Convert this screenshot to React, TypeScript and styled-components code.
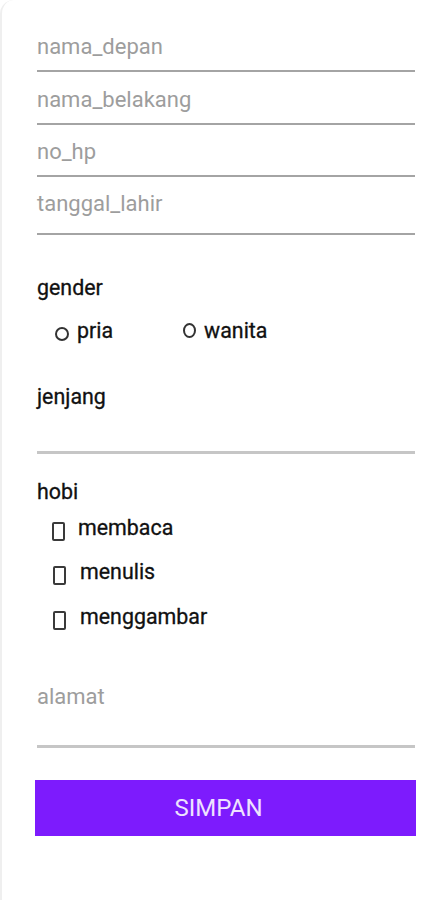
import React from "react";
import styled, { createGlobalStyle } from "styled-components";

const Global = createGlobalStyle`
  html, body { margin: 0; padding: 0; background: #ffffff; }
  body { font-family: Roboto, "Noto Sans", "Liberation Sans", sans-serif; }
  * { box-sizing: border-box; }
`;

const Page = styled.div`
  min-height: 900px;
  background: #ffffff;
  border-left: 2px solid #efefef;
  border-top-left-radius: 14px;
`;

const Form = styled.form`
  display: flex;
  flex-direction: column;
  padding: 19px 12px 40px 35px;
`;

const Field = styled.div<{ $pt: number; $pb: number }>`
  padding-top: ${(p) => p.$pt}px;
  padding-bottom: ${(p) => p.$pb}px;
  border-bottom: 2px solid #a4a4a4;
  font-size: 22px;
  line-height: 26px;
  color: #9d9d9d;
`;

const Label = styled.div<{ $mt: number }>`
  margin-top: ${(p) => p.$mt}px;
  font-size: 21.4px;
  line-height: 24px;
  font-weight: 400;
  color: #111111;
  -webkit-text-stroke: 0.3px #111111;
`;

const RadioRow = styled.div`
  display: flex;
  gap: 70px;
  margin-top: 19px;
  padding-left: 18px;
`;

const RadioItem = styled.label`
  display: flex;
  align-items: center;
  gap: 8px;
  font-size: 21.4px;
  line-height: 24px;
  font-weight: 400;
  color: #111111;
  -webkit-text-stroke: 0.3px #111111;
`;

const Circle = styled.span<{ $up?: boolean }>`
  width: ${(p) => (p.$up ? 13 : 14)}px;
  height: ${(p) => (p.$up ? 15 : 14)}px;
  border: 2px solid #333;
  border-radius: 50%;
  margin-top: ${(p) => (p.$up ? -2 : 6)}px;
  flex: none;
`;

const Spinner = styled.div`
  height: 45px;
  border-bottom: 3px solid #c6c6c6;
`;

const CheckList = styled.div`
  display: flex;
  flex-direction: column;
  gap: 19.5px;
  margin-top: 11.5px;
  padding-left: 15px;
`;

const CheckItem = styled.label<{ $gap: number }>`
  display: flex;
  align-items: flex-start;
  gap: ${(p) => p.$gap}px;
  font-size: 21.4px;
  line-height: 24px;
  font-weight: 400;
  color: #111111;
  -webkit-text-stroke: 0.3px #111111;
`;

const Box = styled.span<{ $dx: number }>`
  width: 13px;
  height: 19px;
  border: 2px solid #3a3a3a;
  border-radius: 2px;
  margin-top: 6px;
  margin-left: ${(p) => p.$dx}px;
  flex: none;
`;

const Address = styled.div`
  margin-top: 54px;
  padding-bottom: 35px;
  border-bottom: 3px solid #c6c6c6;
  font-size: 22px;
  line-height: 26px;
  color: #9d9d9d;
`;

const Button = styled.button`
  margin: 32px -1px 0 -2px;
  height: 56px;
  border: none;
  background: #7d1bfd;
  color: #eee2ff;
  font-family: Roboto, "Noto Sans", sans-serif;
  font-size: 24px;
  padding: 0 14px 0 0;
  text-align: center;
`;

export default function App() {
  return (
    <>
      <Global />
      <Page>
        <Form onSubmit={(e) => e.preventDefault()}>
          <Field $pt={15} $pb={10}>nama_depan</Field>
          <Field $pt={15} $pb={10}>nama_belakang</Field>
          <Field $pt={14} $pb={10}>no_hp</Field>
          <Field $pt={14} $pb={16}>tanggal_lahir</Field>

          <Label $mt={41}>gender</Label>
          <RadioRow>
            <RadioItem>
              <Circle />
              pria
            </RadioItem>
            <RadioItem>
              <Circle $up />
              wanita
            </RadioItem>
          </RadioRow>

          <Label $mt={42}>jenjang</Label>
          <Spinner />

          <Label $mt={26}>hobi</Label>
          <CheckList>
            <CheckItem $gap={13}>
              <Box $dx={0} />
              membaca
            </CheckItem>
            <CheckItem $gap={14}>
              <Box $dx={1} />
              menulis
            </CheckItem>
            <CheckItem $gap={14}>
              <Box $dx={1} />
              menggambar
            </CheckItem>
          </CheckList>

          <Address>alamat</Address>
          <Button type="submit">SIMPAN</Button>
        </Form>
      </Page>
    </>
  );
}
